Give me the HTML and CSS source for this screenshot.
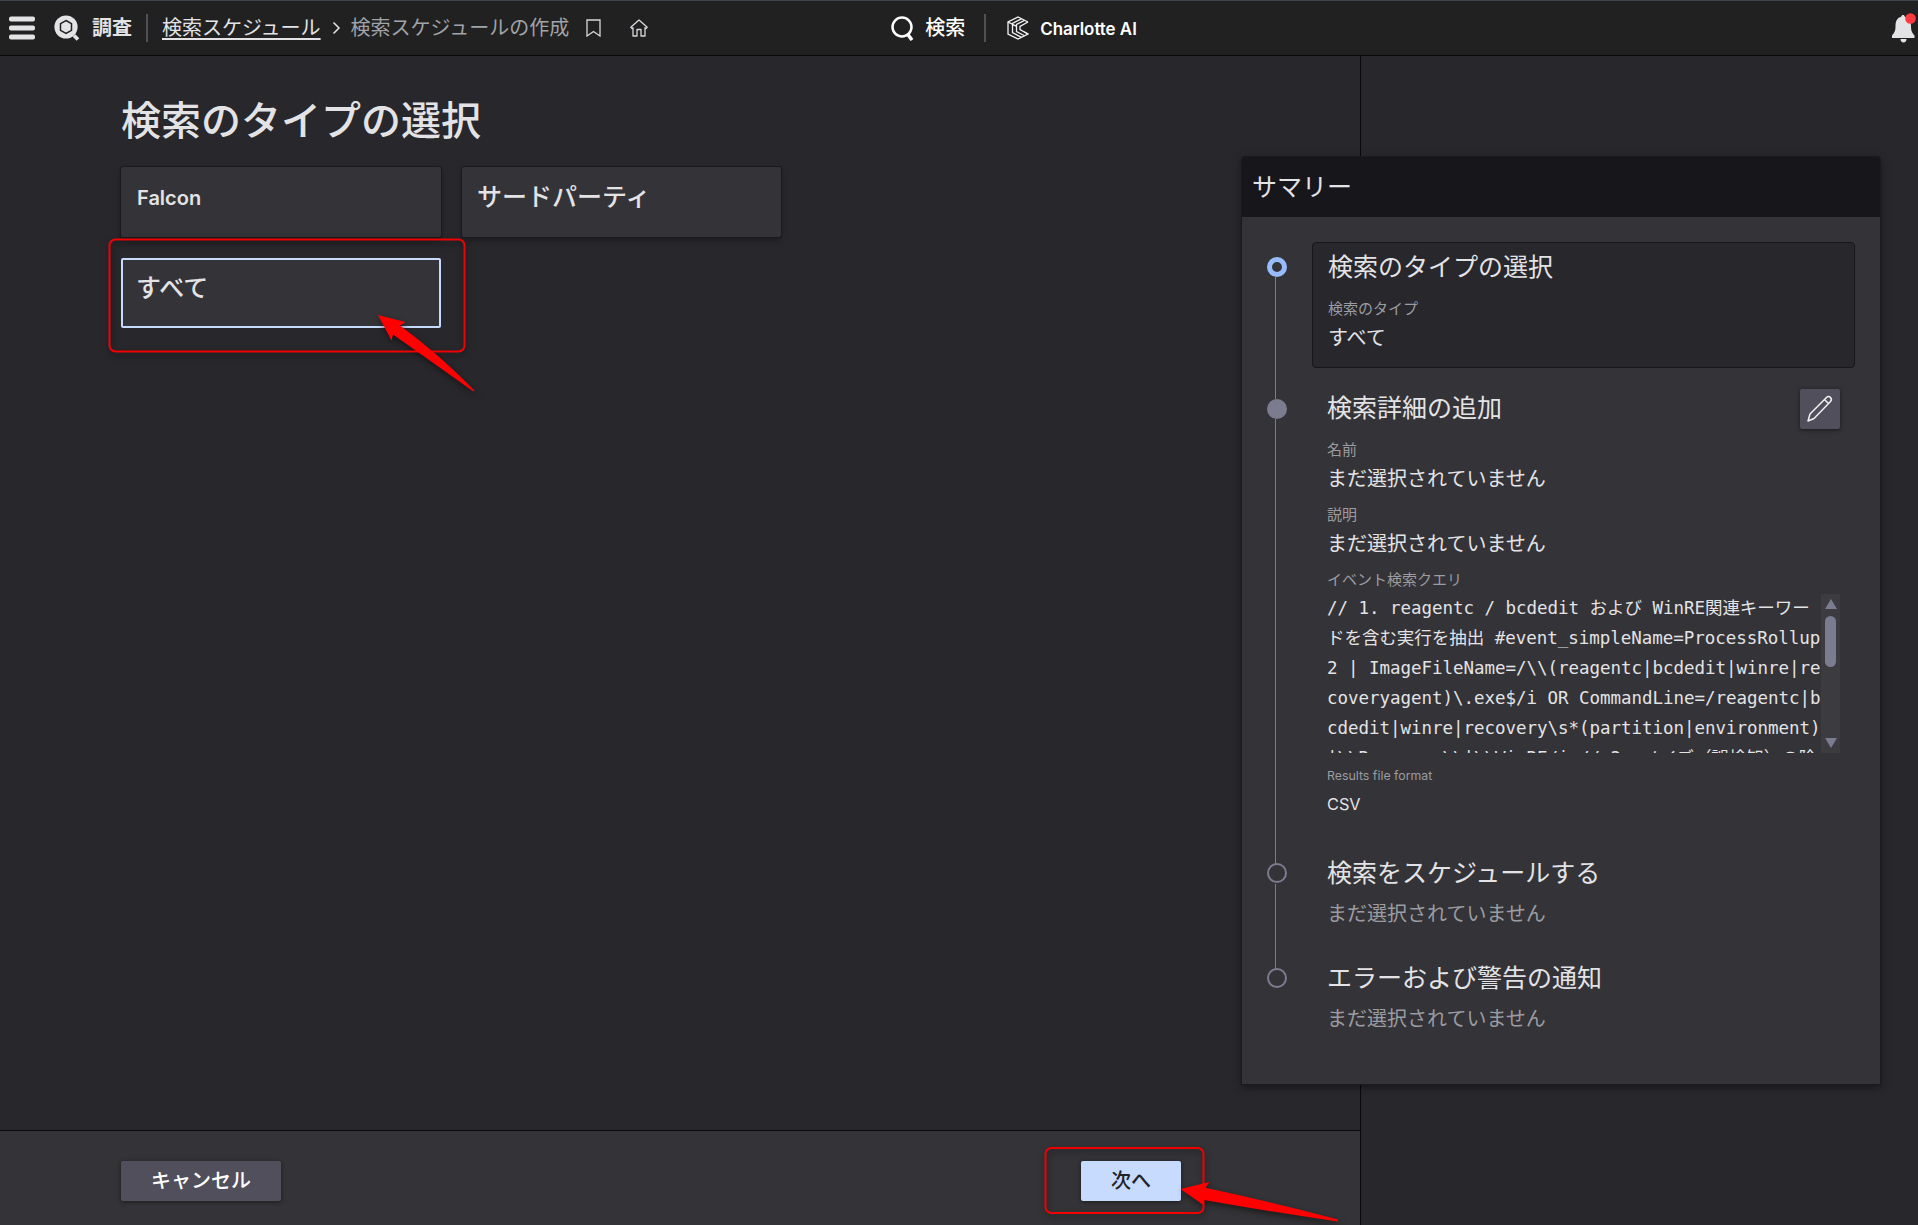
FILE: index.html
```html
<!DOCTYPE html>
<html lang="ja">
<head>
<meta charset="utf-8">
<title>検索スケジュールの作成</title>
<link rel="stylesheet" href="styles.css">
</head>
<body>
<header class="topbar">
  <svg class="menu-icon" width="26" height="24" viewBox="0 0 26 24" fill="#e3e3e6"><rect y="0.5" width="26" height="5" rx="2"/><rect y="9.5" width="26" height="5" rx="2"/><rect y="18.5" width="26" height="5" rx="2"/></svg>
  <svg class="app-icon" width="26" height="26" viewBox="0 0 26 26"><circle cx="12" cy="12" r="11.6" fill="#e3e3e6"/><path d="M12 5.500l5.500 3.200v6.600L12 18.500l-5.500-3.200V8.700z" fill="#e3e3e6" stroke="#212121" stroke-width="1.500"/><path d="M20 20.500l4 4" stroke="#e3e3e6" stroke-width="3.800"/></svg>
  <span class="app-name">調査</span>
  <span class="divider"></span>
  <nav class="crumbs">
    <a class="crumb-link">検索スケジュール</a>
    <svg class="chevron" width="9" height="14" viewBox="0 0 9 14" fill="none" stroke="#e3e3e6" stroke-width="1.500"><path d="M1.500 1.500L7 7l-5.500 5.500"/></svg>
    <span class="crumb-current">検索スケジュールの作成</span>
  </nav>
  <svg class="bookmark" width="15" height="18" viewBox="0 0 15 18" fill="none" stroke="#d8d8dc" stroke-width="1.300"><path d="M1 1h13v16l-6.500-4.500L1 17z"/></svg>
  <svg class="home" width="18" height="18" viewBox="0 0 18 18" fill="none" stroke="#d8d8dc" stroke-width="1.300" stroke-linejoin="round"><path d="M.8 8.300L9 1l8.200 7.300-1.200 1.200-1-.8V17h-4v-6.500H7V17H3V8.700l-1 .8z"/></svg>
  <svg class="search-icon" width="23" height="25" viewBox="0 0 23 25" fill="none" stroke="#fff" stroke-width="2.500"><circle cx="11" cy="11" r="9.500"/><path d="M16.500 18l4.500 6" stroke-width="3.500"/></svg>
  <span class="search-label">検索</span>
  <span class="divider"></span>
  <svg class="ai-icon" width="22" height="24" viewBox="0 0 22 24" fill="none" stroke="#f2f2f4" stroke-width="1.300"><path d="M21 6L11 1 1 6v12l10 5 10-5-4-2.200"/><path d="M21 6l-8 4.500v3l8 4.500M17.500 4.300L9.500 8.500v7l8 4.300M14.500 2.800L5.500 7.300v9.300l9 4.800M1 6l8.500 4.300"/></svg>
  <span class="ai-label">Charlotte AI</span>
  <svg class="bell" width="24" height="30" viewBox="0 0 24 30"><path d="M11 2c1 0 1.500.6 1.800 1.700C16.500 4.500 19 8 19 13c0 5 1 6.500 3.500 9.500V25H0v-2.500C2.500 19.500 3.500 18 3.500 13 3.500 8 5.500 4.500 9.200 3.700 9.500 2.600 10 2 11 2zM8.500 26h6c0 2-1.200 3.500-3 3.500s-3-1.500-3-3.500z" fill="#e3e3e6"/><circle cx="18.500" cy="5.500" r="5.300" fill="#ff3b41"/></svg>
</header>

<div class="workspace">
  <main class="wizard">
    <section class="content">
      <h1>検索のタイプの選択</h1>
      <div class="cards">
        <div class="card latin">Falcon</div>
        <div class="card">サードパーティ</div>
        <div class="card selected">すべて</div>
      </div>
    </section>
    <footer class="actions">
      <button class="btn cancel">キャンセル</button>
      <button class="btn next">次へ</button>
    </footer>
  </main>

  <aside class="summary">
    <h2>サマリー</h2>
    <ol class="steps">
      <li class="step current">
        <span class="dot"></span>
        <div class="step-body">
          <h3>検索のタイプの選択</h3>
          <div class="label">検索のタイプ</div>
          <div class="value">すべて</div>
        </div>
      </li>
      <li class="step done">
        <span class="dot"></span>
        <div class="step-body">
          <div class="step-head">
            <h3>検索詳細の追加</h3>
            <button class="edit"><svg width="28" height="28" viewBox="0 0 28 28" fill="none" stroke="#f2f2f4" stroke-width="1.500" stroke-linejoin="round"><path d="M2 26l2-7L20.500 2.500c1.500-1.500 3-1.200 4 0s1.500 2.500 0 4L8 23.500zM18.500 4.500l4.500 4.500"/></svg></button>
          </div>
          <div class="label">名前</div>
          <div class="value">まだ選択されていません</div>
          <div class="label">説明</div>
          <div class="value">まだ選択されていません</div>
          <div class="label">イベント検索クエリ</div>
          <div class="query">
            <pre>// 1. reagentc / bcdedit および WinRE関連キーワー
ドを含む実行を抽出 #event_simpleName=ProcessRollup
2 | ImageFileName=/\\(reagentc|bcdedit|winre|re
coveryagent)\.exe$/i OR CommandLine=/reagentc|b
cdedit|winre|recovery\s*(partition|environment)
|\\Recovery\\|\\WinRE/i // 2. ノイズ（誤検知）の除</pre>
            <div class="scrollbar"><i class="up"></i><i class="thumb"></i><i class="down"></i></div>
          </div>
          <div class="label small">Results file format</div>
          <div class="value csv">CSV</div>
        </div>
      </li>
      <li class="step pending third">
        <span class="dot"></span>
        <div class="step-body">
          <h3>検索をスケジュールする</h3>
          <div class="value muted">まだ選択されていません</div>
        </div>
      </li>
      <li class="step pending last">
        <span class="dot"></span>
        <div class="step-body">
          <h3>エラーおよび警告の通知</h3>
          <div class="value muted">まだ選択されていません</div>
        </div>
      </li>
    </ol>
  </aside>
</div>

<svg class="marks" width="1918" height="1225" viewBox="0 0 1918 1225">
  <g fill="none" stroke="#f00000" stroke-width="2"><rect x="109.500" y="239.500" width="355" height="112" rx="6"/><rect x="1045.500" y="1148" width="158" height="65" rx="6"/></g>
  <g fill="#ff0000"><path d="M378 315l27.500 7-5.500 3.500Q440 355 474.500 390.500Q474 392 472 390.500Q432 362 393 334.500l-1.500 6z"/><path d="M1180.500 1189l29-7-4 5.800Q1272 1202 1338 1219.500v2Q1272 1212 1204 1200v5.500z"/></g>
</svg>
</body>
</html>
```
FILE: styles.css
```css
* { box-sizing: border-box; }
body {
  margin: 0;
  width: 1918px;
  height: 1225px;
  overflow: hidden;
  background: #28272c;
  color: #e3e3e6;
  font-family: Inter, "Noto Sans CJK JP", sans-serif;
  font-size: 20px;
}
h1, h2, h3, ol, pre { margin: 0; padding: 0; font-weight: 400; }
button { border: 0; padding: 0; font: inherit; color: inherit; }
svg { display: block; flex: none; }

.topbar {
  display: flex;
  align-items: center;
  height: 56px;
  padding: 0 2px 0 9px;
  background: #212121;
  border-top: 1px solid #42454f;
  border-bottom: 1px solid #09090a;
  line-height: 28px;
  white-space: nowrap;
}
.app-icon { margin-left: 19px; }
.app-name { margin-left: 12px; font-weight: 600; }
.divider { width: 2px; height: 28px; margin-left: 14px; background: #505055; }
.crumbs { display: flex; align-items: center; margin-left: 14px; }
.crumb-link { text-decoration: underline; text-decoration-thickness: 1.500px; text-underline-offset: 3px; }
.chevron { margin: 0 10px 0 11px; }
.crumb-current { color: #a0a3a8; }
.bookmark { margin-left: 17px; }
.home { margin-left: 29px; }
.search-icon { margin-left: 243px; }
.search-label { margin-left: 11px; font-weight: 500; color: #fff; }
.search-label + .divider { margin-left: 19px; }
.ai-icon { margin-left: 21px; }
.ai-label { margin-left: 11px; padding-top: 2px; font-size: 16.900px; font-weight: 600; color: #fff; }
.bell { margin-left: auto; }

.workspace { display: flex; align-items: flex-start; height: 1169px; }
.wizard {
  display: flex;
  flex-direction: column;
  flex: none;
  width: 1361px;
  height: 1169px;
  border-right: 1px solid #09090a;
}
.content { flex: 1; padding: 37px 0 0 121px; }
h1 { font-size: 40px; font-weight: 500; line-height: 56px; }
.cards { display: grid; grid-template-columns: 320px 319px; grid-auto-rows: 70px; gap: 21px; margin-top: 18px; }
.card {
  padding: 14px 15px;
  background: #343337;
  border-radius: 2px;
  box-shadow: 0 0 0 1px #1b1a1e, 0 3px 6px rgba(0, 0, 0, .35);
  font-size: 25px;
  font-weight: 500;
  line-height: 32px;
}
.card.latin { padding-left: 16px; font-size: 20px; font-weight: 600; line-height: 35px; }
.card.selected { border: 2px solid #c7dbff; padding: 12px 13px; box-shadow: none; }

.actions {
  display: flex;
  justify-content: space-between;
  height: 95px;
  padding: 30px 179px 0 121px;
  background: #343337;
  border-top: 1px solid #09090a;
}
.btn { height: 40px; border-radius: 2px; line-height: 38px; font-weight: 500; box-shadow: 0 1px 4px rgba(0, 0, 0, .5); }
.cancel { width: 160px; background: #504f5b; color: #fff; }
.next { width: 100px; background: #c7dbff; color: #222126; }

.summary {
  position: relative;
  flex: none;
  width: 638px;
  height: 927px;
  margin: 101px 0 0 -119px;
  background: #343337;
  border-radius: 3px 3px 0 0;
  box-shadow: 0 0 0 1px #1b1a1e, 0 3px 8px rgba(0, 0, 0, .5);
}
h2 { height: 60px; padding-left: 10px; background: #17161a; border-radius: 3px 3px 0 0; font-size: 25px; line-height: 60px; }
.steps { list-style: none; padding: 25px 25px 0; }
.step { position: relative; display: flex; gap: 25px; }
.step:not(.last)::before { content: ""; position: absolute; left: 8px; top: 35px; bottom: -15px; width: 1px; background: #7c7c90; }
.dot { flex: none; width: 20px; height: 20px; margin-top: 15px; border: 2px solid #7c7c90; border-radius: 50%; }
.current .dot { border: 5px solid #98bdff; }
.done .dot { background: #7c7c90; }
.pending .dot { margin-top: 14px; }
.step-body { flex: 1; padding: 0 15px; }
.current .step-body { height: 126px; padding: 0 15px; background: #28272c; border: 1px solid #17161a; border-radius: 4px; }
.current { height: 142px; }
.done { height: 465px; }
.third { height: 105px; }
h3 { height: 50px; font-size: 25px; line-height: 49px; }
.step-head { display: flex; justify-content: space-between; }
.edit { display: grid; place-items: center; width: 40px; height: 40px; margin-top: 5px; background: #504f5b; border-radius: 2px; box-shadow: 0 1px 4px rgba(0, 0, 0, .5); }
.label { height: 30px; padding-top: 5px; font-size: 15px; line-height: 22px; color: #9b9ca1; }
.value { height: 35px; line-height: 30px; }
.step-body .muted { height: 30px; color: #9b9ca1; }
.query { display: flex; justify-content: space-between; height: 159px; overflow: hidden; }
pre { margin-top: -1px; font: 17.500px/30px "DejaVu Sans Mono", "Noto Sans CJK JP", monospace; letter-spacing: -.035px; }
.scrollbar { display: flex; flex-direction: column; align-items: center; width: 19px; height: 159px; padding: 5px 0; background: #3c3b40; }
.up, .down { border: 6px solid transparent; border-top: 0; border-bottom: 10px solid #7c7c90; }
.down { margin-top: auto; border-top: 10px solid #7c7c90; border-bottom: 0; }
.thumb { width: 11px; height: 51px; margin-top: 7px; border-radius: 6px; background: #7c7c90; }
.small { padding-top: 12px; height: 36px; font-size: 12.350px; }
.csv { font-size: 16.300px; }

/* Callouts drawn over the page */
.marks { position: absolute; left: 0; top: 0; filter: drop-shadow(1px 3px 3px rgba(0, 0, 0, .5)); pointer-events: none; }
```
